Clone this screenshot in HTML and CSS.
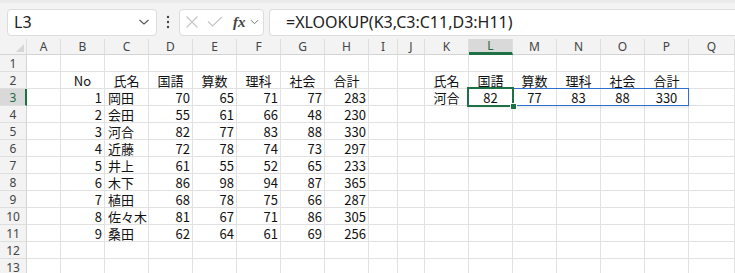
FILE: index.html
```html
<!DOCTYPE html>
<html lang="ja">
<head>
  <meta charset="UTF-8">
  <meta name="viewport" content="width=device-width, initial-scale=1.0">
  <title>XLOOKUP</title>
  <link rel="stylesheet" href="styles.css">
</head>
<body>
  <!-- Name box and formula bar -->
  <div class="toolbar">
    <div class="namebox">
      <span>L3</span>
      <svg class="chev" width="12" height="8" viewBox="0 0 12 8"><path d="M1.5 2 L6 6 L10.5 2" fill="none" stroke="#555" stroke-width="1.1"/></svg>
    </div>
    <svg class="dots" width="4" height="14" viewBox="0 0 4 14"><circle cx="2" cy="2" r="1.2" fill="#444"/><circle cx="2" cy="7" r="1.2" fill="#444"/><circle cx="2" cy="12" r="1.2" fill="#444"/></svg>
    <div class="fxbox">
      <svg width="14" height="14" viewBox="0 0 14 14"><path d="M1.5 1.5 L12.5 12.5 M12.5 1.5 L1.5 12.5" stroke="#c4c4c4" stroke-width="1.1"/></svg>
      <svg width="16" height="12" viewBox="0 0 16 12"><path d="M1 5.5 L5.5 10 L15 1" fill="none" stroke="#c4c4c4" stroke-width="1.1"/></svg>
      <span class="fx">fx</span>
      <svg class="chev-sm" width="9" height="6" viewBox="0 0 9 6"><path d="M1 1.2 L4.5 4.7 L8 1.2" fill="none" stroke="#777" stroke-width="1"/></svg>
    </div>
    <div class="formula">=XLOOKUP(K3,C3:C11,D3:H11)</div>
  </div>

  <!-- Worksheet grid, filled by the script below -->
  <div class="sheet" id="sheet">
    <div class="spill"></div>
    <div class="sel"><span class="handle"></span></div>
  </div>

  <script>
    var cols = ["A","B","C","D","E","F","G","H","I","J","K","L","M","N","O","P","Q"];
    var heads = ["氏名","国語","算数","理科","社会","合計"];
    var data = [
      [1,"岡田",70,65,71,77,283],
      [2,"会田",55,61,66,48,230],
      [3,"河合",82,77,83,88,330],
      [4,"近藤",72,78,74,73,297],
      [5,"井上",61,55,52,65,233],
      [6,"木下",86,98,94,87,365],
      [7,"植田",68,78,75,66,287],
      [8,"佐々木",81,67,71,86,305],
      [9,"桑田",62,64,61,69,256]
    ];

    // Cell contents keyed like "B3"
    var cells = {};
    var align = {};
    cells.B2 = "No";
    for (var i = 0; i < heads.length; i++) {
      cells[cols[i + 2] + "2"] = heads[i];
      cells[cols[i + 10] + "2"] = heads[i];
    }
    data.forEach(function (row, r) {
      row.forEach(function (v, c) {
        var key = cols[c + 1] + (r + 3);
        cells[key] = v;
        align[key] = c === 1 ? "left" : "right";
      });
    });
    var found = data[2];
    cells.K3 = found[1];
    for (var j = 2; j < found.length; j++) cells[cols[j + 9] + "3"] = found[j];

    var sheet = document.getElementById("sheet");
    var corner = document.createElement("div");
    corner.className = "corner";
    corner.innerHTML = '<span class="tri"></span>';
    sheet.appendChild(corner);

    cols.forEach(function (c) {
      var h = document.createElement("div");
      h.className = "colhead" + (c === "L" ? " active" : "");
      h.textContent = c;
      sheet.appendChild(h);
    });

    for (var r = 1; r <= 13; r++) {
      var rh = document.createElement("div");
      rh.className = "rowhead" + (r === 3 ? " active" : "");
      rh.textContent = r;
      sheet.appendChild(rh);
      cols.forEach(function (c) {
        var key = c + r;
        var cell = document.createElement("div");
        cell.className = "cell " + (align[key] || "center");
        if (cells[key] !== undefined) cell.textContent = cells[key];
        sheet.appendChild(cell);
      });
    }
  </script>
</body>
</html>
```

FILE: styles.css
```css
body {
  margin: 0;
  width: 735px;
  height: 273px;
  overflow: hidden;
  background-color: #ffffff;
  font-family: "Noto Sans CJK JP", sans-serif;
}

.toolbar {
  display: flex;
  align-items: center;
  height: 39px;
  box-sizing: border-box;
  padding: 2px 0 0 7px;
  background-color: #f3f3f3;
  border-top: 3px solid #ebebeb;
}

.namebox,
.fxbox,
.formula {
  height: 27px;
  box-sizing: border-box;
  background-color: #ffffff;
  border: 1px solid #dcdcdc;
  border-radius: 4px;
  display: flex;
  align-items: center;
}

.namebox {
  width: 150px;
  padding: 0 6px 0 6px;
  justify-content: space-between;
  font-family: "Noto Sans", sans-serif;
  font-size: 16px;
  color: #222;
}

.dots {
  margin: 0 9px 0 9px;
}

.fxbox {
  width: 85px;
  padding: 0 3px 0 5px;
  gap: 8px;
}

.fx {
  font-family: "Liberation Serif", serif;
  font-style: italic;
  font-weight: bold;
  font-size: 15px;
  color: #444;
  margin-left: 2px;
  margin-right: -4px;
}

.formula {
  flex-grow: 1;
  margin-left: 5px;
  padding-left: 16px;
  border-right: none;
  border-radius: 4px 0 0 4px;
  font-family: "Noto Sans", sans-serif;
  font-size: 16px;
  color: #222;
}

.sheet {
  position: relative;
  display: grid;
  grid-template-columns: 27px 34px repeat(7, 44px) 29px 27px repeat(6, 44px) 46px;
  grid-template-rows: 16px;
  grid-auto-rows: 17px;
  background-color: #f3f3f3;
}

.sheet > div {
  box-sizing: border-box;
}

.corner,
.colhead,
.rowhead {
  background-color: #f3f3f3;
  border-right: 1px solid #dedede;
  border-bottom: 1px solid #d4d4d4;
  font-family: "Noto Sans", sans-serif;
  font-size: 12px;
  color: #444;
  text-align: center;
  line-height: 15px;
}

.rowhead {
  line-height: 17px;
  border-right-color: #d4d4d4;
  border-bottom-color: #dedede;
}

.corner {
  display: flex;
  align-items: flex-end;
  justify-content: flex-end;
  padding: 0 2px 2px 0;
}

.tri {
  width: 8px;
  height: 8px;
  background-color: #d6d6d6;
  clip-path: polygon(100% 0, 100% 100%, 0 100%);
}

.colhead.active {
  background-color: #d9d9d9;
  color: #1e6b3e;
  border-bottom: 3px solid #1e7145;
  line-height: 13px;
}

.rowhead.active {
  background-color: #d9d9d9;
  color: #1e6b3e;
  border-right: 2px solid #1e7145;
  padding-left: 1px;
}

.cell {
  background-color: #ffffff;
  border-right: 1px solid #e1e1e1;
  border-bottom: 1px solid #e1e1e1;
  font-size: 13px;
  line-height: 17px;
  padding: 0 2px;
  color: #111;
  white-space: nowrap;
  overflow: hidden;
}

.cell.right {
  text-align: right;
}

.cell.left {
  text-align: left;
  padding-left: 3px;
}

.cell.center {
  text-align: center;
}

/* spilled result range L3:P3 */
.spill {
  position: absolute;
  left: 468px;
  top: 49px;
  width: 221px;
  height: 18px;
  box-sizing: border-box;
  border: 1px solid #2f6fcf;
  box-shadow: 0 2px 3px rgba(0, 0, 0, 0.08);
  z-index: 1;
}

/* active cell L3 */
.sel {
  position: absolute;
  left: 467px;
  top: 48px;
  width: 47px;
  height: 20px;
  box-sizing: border-box;
  border: 2px solid #1e7145;
  z-index: 2;
}

.handle {
  position: absolute;
  right: -5px;
  bottom: -5px;
  width: 7px;
  height: 7px;
  box-sizing: border-box;
  background-color: #1e7145;
  border: 1px solid #ffffff;
}
```
